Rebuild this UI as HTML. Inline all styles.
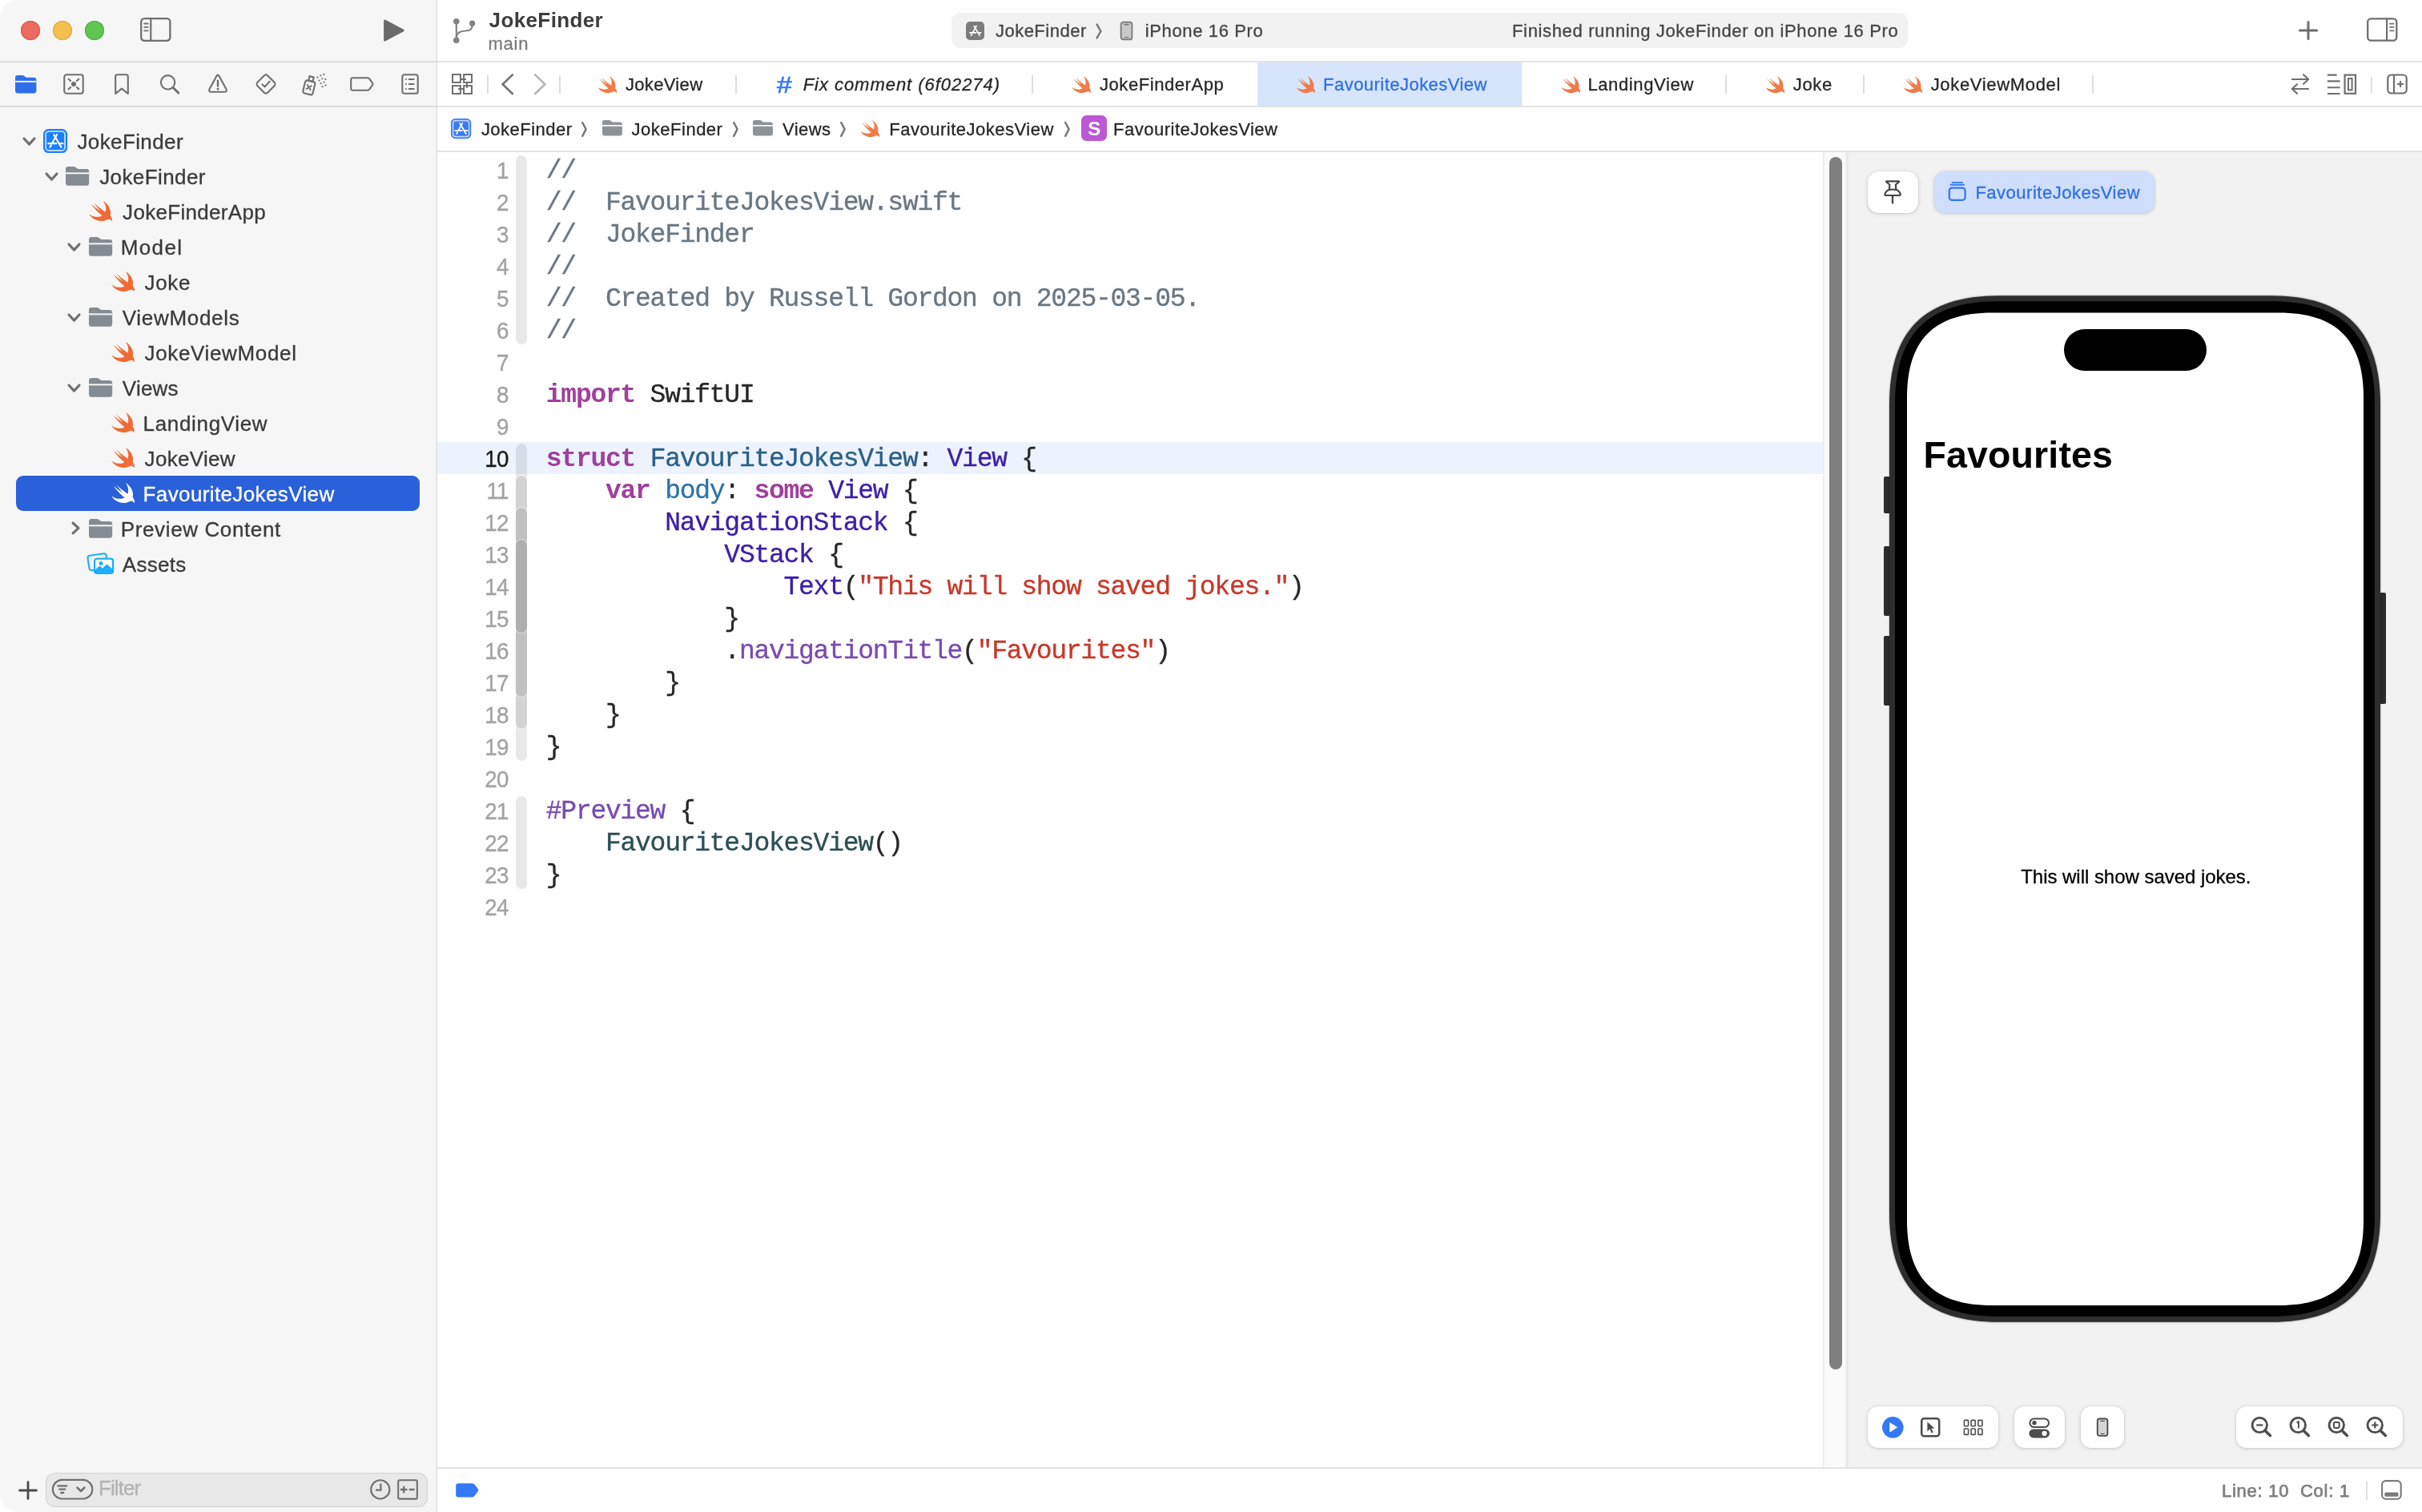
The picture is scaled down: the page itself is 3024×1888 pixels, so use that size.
<!DOCTYPE html>
<html lang="en"><head><meta charset="utf-8"><title>JokeFinder — FavouriteJokesView.swift</title><style>
html,body{margin:0;padding:0}
@media (max-width:1600px){html{zoom:.5}}
body{width:3024px;height:1888px;position:relative;overflow:hidden;background:#fff;font-family:"Liberation Sans",sans-serif}
#r{position:absolute;left:0;top:0;width:3024px;height:1888px;will-change:transform}
#r>div,#r>svg,#r>span{position:absolute;display:block}
.t{white-space:pre;line-height:1;-webkit-text-stroke:0.3px}
.t.b{-webkit-text-stroke:0}
svg{overflow:visible}
.cl{left:681.8px;height:40px;line-height:40px;white-space:pre;font-family:"Liberation Mono",monospace;font-size:33px;letter-spacing:-1.258px;color:#262626;-webkit-text-stroke:0.35px}
.cl .k{font-weight:700;-webkit-text-stroke:0}
#r>.ln{left:540px;width:94.6px;height:40px;line-height:40px;text-align:right;font-size:29.2px;letter-spacing:-0.85px;color:#a3a3a3;transform:scaleX(.95);transform-origin:100% 50%;-webkit-text-stroke:0.35px}
#r>.ln.cur{color:#1a1a1a}
</style></head>
<body>
<div id="r">
<div style="left:0px;top:0px;width:545px;height:1888px;background:#f6f6f6;border-radius:22px 0 0 22px;"></div>
<div style="left:544px;top:0px;width:1px;height:1888px;background:#eeeeee;"></div>
<div style="left:545px;top:0px;width:1px;height:1888px;background:#dddddd;"></div>
<div style="left:0px;top:76px;width:545px;height:2px;background:#dddddd;"></div>
<div style="left:546px;top:76px;width:2478px;height:2px;background:#e3e3e3;"></div>
<div style="left:0px;top:132px;width:545px;height:2px;background:#dddddd;"></div>
<div style="left:546px;top:132px;width:2478px;height:2px;background:#e3e3e3;"></div>
<div style="left:546px;top:188px;width:2478px;height:2px;background:#e3e3e3;"></div>
<div style="left:26px;top:26px;width:24px;height:24px;background:#ec6a5e;border-radius:12px;box-shadow:inset 0 0 0 1px #d4544a;"></div>
<div style="left:66px;top:26px;width:24px;height:24px;background:#f4bf4f;border-radius:12px;box-shadow:inset 0 0 0 1px #dba73d;"></div>
<div style="left:106px;top:26px;width:24px;height:24px;background:#61c554;border-radius:12px;box-shadow:inset 0 0 0 1px #50a943;"></div>
<svg style="left:174px;top:21px;" width="41" height="32" viewBox="0 0 41 32"><rect x="2.2" y="2.1" width="36.2" height="27.7" rx="4.2" fill="none" stroke="#6f6f6f" stroke-width="2.3"/><path d="M14.3 2.2 V29.8" stroke="#6f6f6f" stroke-width="2.2"/><path d="M6.2 8.5 h4.6 M6.2 12.9 h4.6 M6.2 17.3 h4.6" stroke="#6f6f6f" stroke-width="1.8" stroke-linecap="round"/></svg>
<svg style="left:478px;top:23px;" width="30" height="30" viewBox="0 0 30 30"><path d="M2.6 3 L25.2 15 L2.6 27 Z" fill="#6a6a6a" stroke="#6a6a6a" stroke-width="3" stroke-linejoin="round"/></svg>
<svg style="left:564px;top:21px;" width="32" height="35" viewBox="0 0 32 35"><g fill="none" stroke="#828282" stroke-width="2.2"><path d="M5.8 6 V29"/><path d="M25.6 8.2 V10.6 C25.6 16.4 22 17.1 17.4 17.5 C11.4 18 6.6 19 6 25"/></g><circle cx="5.8" cy="5.8" r="3.8" fill="#828282"/><circle cx="25.6" cy="8.2" r="3.6" fill="#828282"/><circle cx="5.8" cy="29.2" r="3.8" fill="#828282"/></svg>
<span class="t b" style='left:610.60px;top:12.00px;font-size:26px;color:#3d3d3d;letter-spacing:0.378px;font-weight:700;'>JokeFinder</span>
<span class="t" style='left:609.60px;top:43.50px;font-size:22px;color:#7b7b7b;letter-spacing:0.700px;'>main</span>
<div style="left:1188px;top:16px;width:1194px;height:44px;background:#f2f2f2;border-radius:11px;"></div>
<svg style="left:1206px;top:27px" width="23" height="23"><rect width="23" height="23" rx="5.06" fill="#7b7b7b"/><g stroke="#fff" stroke-width="1.61" stroke-linecap="round" fill="none"><path d="M13.03 5.37 L8.82 13.03"/><path d="M7.51 15.56 L6.44 17.33"/><path d="M10.12 5.52 L17.17 17.33"/><path d="M4.83 13.88 L12.57 13.88"/><path d="M15.79 13.88 L18.63 13.88"/></g></svg>
<span class="t" style='left:1242.90px;top:27.80px;font-size:22px;color:#444;letter-spacing:0.500px;'>JokeFinder</span>
<span class="t" style='left:1429.80px;top:27.80px;font-size:22px;color:#444;letter-spacing:0.625px;'>iPhone 16 Pro</span>
<span class="t" style='left:1888.00px;top:27.80px;font-size:22px;color:#444;letter-spacing:0.651px;'>Finished running JokeFinder on iPhone 16 Pro</span>
<svg style="left:1367px;top:29px;" width="10" height="20" viewBox="0 0 10 20"><path d="M2.6 1.6 L7.4 10 L2.6 18.4" fill="none" stroke="#777" stroke-width="2.5" stroke-linecap="round" stroke-linejoin="round"/></svg>
<svg style="left:1398px;top:26px;" width="17" height="25" viewBox="0 0 17 25"><rect x="1.6" y="1.6" width="13.8" height="21.8" rx="3" fill="#c9c9c9" stroke="#777" stroke-width="1.8"/><path d="M6 4.6 h5" stroke="#777" stroke-width="1.6" stroke-linecap="round"/><path d="M5.5 20.6 h6" stroke="#777" stroke-width="1.2"/></svg>
<svg style="left:2869px;top:25px;" width="26" height="26" viewBox="0 0 26 26"><path d="M13 2.4 V23.6 M2.4 13 H23.6" stroke="#6f6f6f" stroke-width="3" stroke-linecap="round"/></svg>
<svg style="left:2954px;top:21px;" width="41" height="32" viewBox="0 0 41 32"><rect x="2.2" y="2.3" width="36.1" height="27.4" rx="4.2" fill="none" stroke="#6f6f6f" stroke-width="2.3"/><path d="M26.1 2.4 V29.6" stroke="#6f6f6f" stroke-width="2.2"/><path d="M30 8.6 h4.6 M30 12.9 h4.6 M30 17.3 h4.6" stroke="#6f6f6f" stroke-width="1.8" stroke-linecap="round"/></svg>
<svg style="left:18.8px;top:93.8px" width="26.4" height="22.4"><path d="M0 3.02 Q0 0 2.91 0 L8.65 0 Q10.47 0 11.65 1.13 L12.74 2.17 Q13.47 2.84 14.75 2.84 L23.30 2.84 Q26.4 2.84 26.4 6.05 L26.4 19.00 Q26.4 22.4 23.12 22.4 L3.28 22.4 Q0 22.4 0 19.00 Z" fill="#2f6fea"/><rect x="0" y="6.90" width="26.4" height="1.89" fill="#f6f6f6"/></svg>
<svg style="left:78px;top:90.8px;" width="28" height="28" viewBox="0 0 28 28"><rect x="2.3" y="2.3" width="23.4" height="23.4" rx="2.8" fill="none" stroke="#6f6f6f" stroke-width="2.1" stroke-linecap="round" stroke-linejoin="round"/><circle cx="14" cy="14" r="3" fill="#6f6f6f"/><path d="M7.7 7.7 L10.1 10.1 M20.3 7.7 L17.9 10.1 M7.7 20.3 L10.1 17.9 M20.3 20.3 L17.9 17.9" fill="none" stroke="#6f6f6f" stroke-width="2.1" stroke-linecap="round" stroke-linejoin="round" stroke-width="2"/></svg>
<svg style="left:142px;top:91px;" width="20" height="28" viewBox="0 0 20 28"><path d="M2.2 4.6 Q2.2 2.2 4.6 2.2 L15.4 2.2 Q17.8 2.2 17.8 4.6 L17.8 26 L10 19.6 L2.2 26 Z" fill="none" stroke="#6f6f6f" stroke-width="2.1" stroke-linecap="round" stroke-linejoin="round"/></svg>
<svg style="left:198px;top:91px;" width="28" height="28" viewBox="0 0 28 28"><circle cx="11.6" cy="11.8" r="8.7" fill="none" stroke="#6f6f6f" stroke-width="2.1" stroke-linecap="round" stroke-linejoin="round"/><path d="M18 18.2 L24.8 25" fill="none" stroke="#6f6f6f" stroke-width="3" stroke-linecap="round"/></svg>
<svg style="left:259px;top:91px;" width="26" height="26" viewBox="0 0 26 26"><path d="M13 2.6 Q13.9 2.6 14.5 3.7 L23.6 20.6 Q24.6 23.6 22 23.7 L4 23.7 Q1.4 23.6 2.4 20.6 L11.5 3.7 Q12.1 2.6 13 2.6 Z" fill="none" stroke="#6f6f6f" stroke-width="2.1" stroke-linecap="round" stroke-linejoin="round"/><path d="M13 9.6 V16.4" fill="none" stroke="#6f6f6f" stroke-width="2.4" stroke-linecap="round"/><circle cx="13" cy="20" r="1.5" fill="#6f6f6f"/></svg>
<svg style="left:318px;top:91px;" width="28" height="28" viewBox="0 0 28 28"><path d="M14 2.2 Q15 2.2 16 3.2 L24.8 12 Q26.2 14 24.8 16 L16 24.8 Q14 26.2 12 24.8 L3.2 16 Q1.8 14 3.2 12 L12 3.2 Q13 2.2 14 2.2 Z" fill="none" stroke="#6f6f6f" stroke-width="2.1" stroke-linecap="round" stroke-linejoin="round"/><path d="M9.6 14.4 L12.8 17.4 L18.6 10.8" fill="none" stroke="#6f6f6f" stroke-width="2.1" stroke-linecap="round" stroke-linejoin="round"/></svg>
<svg style="left:376px;top:90px;" width="33" height="30" viewBox="0 0 33 30"><g transform="rotate(14 10 19)"><rect x="3.6" y="11.2" width="12.6" height="16.4" rx="2.6" fill="none" stroke="#6f6f6f" stroke-width="2.1" stroke-linecap="round" stroke-linejoin="round"/><rect x="7.2" y="5.4" width="5.4" height="5.6" fill="none" stroke="#6f6f6f" stroke-width="2.1" stroke-linecap="round" stroke-linejoin="round"/><path d="M7.2 16.6 L12.4 21.8 M12.4 16.6 L7.2 21.8" fill="none" stroke="#6f6f6f" stroke-width="1.9" stroke-linecap="round"/></g><g fill="#6f6f6f"><rect x="19.5" y="5.6" width="1.9" height="1.9"/><rect x="23.4" y="3.4" width="1.9" height="1.9"/><rect x="27.4" y="1.8" width="1.9" height="1.9"/><rect x="21.6" y="9.6" width="1.9" height="1.9"/><rect x="25.4" y="7.4" width="1.9" height="1.9"/><rect x="29.4" y="8" width="1.9" height="1.9"/><rect x="23.6" y="13.2" width="1.9" height="1.9"/><rect x="27.6" y="11.6" width="1.9" height="1.9"/><rect x="25.6" y="17.2" width="1.9" height="1.9"/><rect x="29.6" y="15.6" width="1.9" height="1.9"/></g></svg>
<svg style="left:436px;top:95px;" width="32" height="20" viewBox="0 0 32 20"><path d="M4.4 2.3 L22.8 2.3 Q24.6 2.3 25.6 3.8 L29.2 9 Q29.8 10 29.2 11 L25.6 16.2 Q24.6 17.7 22.8 17.7 L4.4 17.7 Q2.2 17.7 2.2 15.4 L2.2 4.6 Q2.2 2.3 4.4 2.3 Z" fill="none" stroke="#6f6f6f" stroke-width="2.1" stroke-linecap="round" stroke-linejoin="round"/></svg>
<svg style="left:500px;top:91px;" width="24" height="28" viewBox="0 0 24 28"><rect x="2.3" y="2.2" width="19.4" height="23.6" rx="2.6" fill="none" stroke="#6f6f6f" stroke-width="2.1" stroke-linecap="round" stroke-linejoin="round"/><path d="M10 8 H17.4 M10 14 H17.4 M10 20 H17.4" fill="none" stroke="#6f6f6f" stroke-width="2.2"/><path d="M6.2 8 H7.8 M6.2 14 H7.8 M6.2 20 H7.8" fill="none" stroke="#6f6f6f" stroke-width="2.2"/></svg>
<div style="left:20px;top:594px;width:504px;height:44px;background:#2a60da;border-radius:9px;"></div>
<span class="t" style='left:96.40px;top:164.00px;font-size:26px;color:#3a3a3a;letter-spacing:0.400px;'>JokeFinder</span>
<svg style="left:27.700000000000003px;top:171.25px" width="17.0" height="11.1"><path d="M2 2 L8.5 9.1 L15.0 2" fill="none" stroke="#6f6f6f" stroke-width="3.1" stroke-linecap="round" stroke-linejoin="round"/></svg>
<svg style="left:54px;top:160.9px" width="30.1" height="30.1"><rect width="30.1" height="30.1" rx="6.62" fill="#1a80fb"/><rect x="3.11" y="3.11" width="23.88" height="23.88" rx="3.81" fill="none" stroke="#fff" stroke-opacity=".7" stroke-width="1.91"/><g stroke="#fff" stroke-width="2.11" stroke-linecap="round" fill="none"><path d="M17.06 7.02 L11.54 17.06"/><path d="M9.83 20.37 L8.43 22.68"/><path d="M13.24 7.22 L22.47 22.68"/><path d="M6.32 18.16 L16.45 18.16"/><path d="M20.67 18.16 L24.38 18.16"/></g></svg>
<span class="t" style='left:124.20px;top:208.00px;font-size:26px;color:#3a3a3a;letter-spacing:0.400px;'>JokeFinder</span>
<svg style="left:55.7px;top:215.25px" width="17.0" height="11.1"><path d="M2 2 L8.5 9.1 L15.0 2" fill="none" stroke="#6f6f6f" stroke-width="3.1" stroke-linecap="round" stroke-linejoin="round"/></svg>
<svg style="left:82.4px;top:208px" width="29.2" height="23.8"><path d="M0 3.21 Q0 0 3.22 0 L9.57 0 Q11.58 0 12.89 1.21 L14.10 2.31 Q14.90 3.01 16.31 3.01 L25.78 3.01 Q29.2 3.01 29.2 6.43 L29.2 20.18 Q29.2 23.8 25.58 23.8 L3.62 23.8 Q0 23.8 0 20.18 Z" fill="#858b92"/><rect x="0" y="7.33" width="29.2" height="2.01" fill="#f6f6f6"/></svg>
<span class="t" style='left:153.10px;top:252.00px;font-size:26px;color:#3a3a3a;letter-spacing:0.308px;'>JokeFinderApp</span>
<svg style="left:111.3px;top:250.8px" width="29" height="25.2"><path transform="scale(1.6007,1.5543) translate(-2.411,-3.409)" d="M13.543 3.41c4.114 2.47 6.545 7.162 5.549 11.131-.024.093-.05.181-.076.272l.002.001c2.062 2.538 1.5 5.258 1.236 4.745-1.072-2.086-3.066-1.568-4.088-1.043a6.803 6.803 0 0 1-.281.158l-.02.012-.002.002c-2.115 1.123-4.957 1.205-7.812-.022a12.568 12.568 0 0 1-5.64-4.838c.649.48 1.35.902 2.097 1.252 3.019 1.414 6.051 1.311 8.197-.002C9.651 12.73 7.101 9.67 5.146 7.191a10.628 10.628 0 0 1-1.005-1.384c2.34 2.142 6.038 4.83 7.365 5.576C8.69 8.408 6.208 4.743 6.324 4.86c4.436 4.47 8.528 6.996 8.528 6.996.154.085.27.154.36.213.085-.215.16-.437.224-.668.708-2.588-.09-5.548-1.893-7.992z" fill="#f06a35"/></svg>
<span class="t" style='left:150.80px;top:296.00px;font-size:26px;color:#3a3a3a;letter-spacing:1.350px;'>Model</span>
<svg style="left:83.7px;top:303.25px" width="17.0" height="11.1"><path d="M2 2 L8.5 9.1 L15.0 2" fill="none" stroke="#6f6f6f" stroke-width="3.1" stroke-linecap="round" stroke-linejoin="round"/></svg>
<svg style="left:111.00000000000001px;top:296px" width="29.2" height="23.8"><path d="M0 3.21 Q0 0 3.22 0 L9.57 0 Q11.58 0 12.89 1.21 L14.10 2.31 Q14.90 3.01 16.31 3.01 L25.78 3.01 Q29.2 3.01 29.2 6.43 L29.2 20.18 Q29.2 23.8 25.58 23.8 L3.62 23.8 Q0 23.8 0 20.18 Z" fill="#858b92"/><rect x="0" y="7.33" width="29.2" height="2.01" fill="#f6f6f6"/></svg>
<span class="t" style='left:180.60px;top:340.00px;font-size:26px;color:#3a3a3a;letter-spacing:0.633px;'>Joke</span>
<svg style="left:138.79999999999998px;top:338.8px" width="29" height="25.2"><path transform="scale(1.6007,1.5543) translate(-2.411,-3.409)" d="M13.543 3.41c4.114 2.47 6.545 7.162 5.549 11.131-.024.093-.05.181-.076.272l.002.001c2.062 2.538 1.5 5.258 1.236 4.745-1.072-2.086-3.066-1.568-4.088-1.043a6.803 6.803 0 0 1-.281.158l-.02.012-.002.002c-2.115 1.123-4.957 1.205-7.812-.022a12.568 12.568 0 0 1-5.64-4.838c.649.48 1.35.902 2.097 1.252 3.019 1.414 6.051 1.311 8.197-.002C9.651 12.73 7.101 9.67 5.146 7.191a10.628 10.628 0 0 1-1.005-1.384c2.34 2.142 6.038 4.83 7.365 5.576C8.69 8.408 6.208 4.743 6.324 4.86c4.436 4.47 8.528 6.996 8.528 6.996.154.085.27.154.36.213.085-.215.16-.437.224-.668.708-2.588-.09-5.548-1.893-7.992z" fill="#f06a35"/></svg>
<span class="t" style='left:152.80px;top:384.00px;font-size:26px;color:#3a3a3a;letter-spacing:0.689px;'>ViewModels</span>
<svg style="left:83.7px;top:391.25px" width="17.0" height="11.1"><path d="M2 2 L8.5 9.1 L15.0 2" fill="none" stroke="#6f6f6f" stroke-width="3.1" stroke-linecap="round" stroke-linejoin="round"/></svg>
<svg style="left:111.00000000000001px;top:384px" width="29.2" height="23.8"><path d="M0 3.21 Q0 0 3.22 0 L9.57 0 Q11.58 0 12.89 1.21 L14.10 2.31 Q14.90 3.01 16.31 3.01 L25.78 3.01 Q29.2 3.01 29.2 6.43 L29.2 20.18 Q29.2 23.8 25.58 23.8 L3.62 23.8 Q0 23.8 0 20.18 Z" fill="#858b92"/><rect x="0" y="7.33" width="29.2" height="2.01" fill="#f6f6f6"/></svg>
<span class="t" style='left:180.60px;top:428.00px;font-size:26px;color:#3a3a3a;letter-spacing:0.642px;'>JokeViewModel</span>
<svg style="left:138.79999999999998px;top:426.8px" width="29" height="25.2"><path transform="scale(1.6007,1.5543) translate(-2.411,-3.409)" d="M13.543 3.41c4.114 2.47 6.545 7.162 5.549 11.131-.024.093-.05.181-.076.272l.002.001c2.062 2.538 1.5 5.258 1.236 4.745-1.072-2.086-3.066-1.568-4.088-1.043a6.803 6.803 0 0 1-.281.158l-.02.012-.002.002c-2.115 1.123-4.957 1.205-7.812-.022a12.568 12.568 0 0 1-5.64-4.838c.649.48 1.35.902 2.097 1.252 3.019 1.414 6.051 1.311 8.197-.002C9.651 12.73 7.101 9.67 5.146 7.191a10.628 10.628 0 0 1-1.005-1.384c2.34 2.142 6.038 4.83 7.365 5.576C8.69 8.408 6.208 4.743 6.324 4.86c4.436 4.47 8.528 6.996 8.528 6.996.154.085.27.154.36.213.085-.215.16-.437.224-.668.708-2.588-.09-5.548-1.893-7.992z" fill="#f06a35"/></svg>
<span class="t" style='left:152.80px;top:472.00px;font-size:26px;color:#3a3a3a;letter-spacing:0.225px;'>Views</span>
<svg style="left:83.7px;top:479.25px" width="17.0" height="11.1"><path d="M2 2 L8.5 9.1 L15.0 2" fill="none" stroke="#6f6f6f" stroke-width="3.1" stroke-linecap="round" stroke-linejoin="round"/></svg>
<svg style="left:111.00000000000001px;top:472px" width="29.2" height="23.8"><path d="M0 3.21 Q0 0 3.22 0 L9.57 0 Q11.58 0 12.89 1.21 L14.10 2.31 Q14.90 3.01 16.31 3.01 L25.78 3.01 Q29.2 3.01 29.2 6.43 L29.2 20.18 Q29.2 23.8 25.58 23.8 L3.62 23.8 Q0 23.8 0 20.18 Z" fill="#858b92"/><rect x="0" y="7.33" width="29.2" height="2.01" fill="#f6f6f6"/></svg>
<span class="t" style='left:178.60px;top:516.00px;font-size:26px;color:#3a3a3a;letter-spacing:0.660px;'>LandingView</span>
<svg style="left:138.79999999999998px;top:514.8px" width="29" height="25.2"><path transform="scale(1.6007,1.5543) translate(-2.411,-3.409)" d="M13.543 3.41c4.114 2.47 6.545 7.162 5.549 11.131-.024.093-.05.181-.076.272l.002.001c2.062 2.538 1.5 5.258 1.236 4.745-1.072-2.086-3.066-1.568-4.088-1.043a6.803 6.803 0 0 1-.281.158l-.02.012-.002.002c-2.115 1.123-4.957 1.205-7.812-.022a12.568 12.568 0 0 1-5.64-4.838c.649.48 1.35.902 2.097 1.252 3.019 1.414 6.051 1.311 8.197-.002C9.651 12.73 7.101 9.67 5.146 7.191a10.628 10.628 0 0 1-1.005-1.384c2.34 2.142 6.038 4.83 7.365 5.576C8.69 8.408 6.208 4.743 6.324 4.86c4.436 4.47 8.528 6.996 8.528 6.996.154.085.27.154.36.213.085-.215.16-.437.224-.668.708-2.588-.09-5.548-1.893-7.992z" fill="#f06a35"/></svg>
<span class="t" style='left:180.60px;top:560.00px;font-size:26px;color:#3a3a3a;letter-spacing:0.300px;'>JokeView</span>
<svg style="left:138.79999999999998px;top:558.8px" width="29" height="25.2"><path transform="scale(1.6007,1.5543) translate(-2.411,-3.409)" d="M13.543 3.41c4.114 2.47 6.545 7.162 5.549 11.131-.024.093-.05.181-.076.272l.002.001c2.062 2.538 1.5 5.258 1.236 4.745-1.072-2.086-3.066-1.568-4.088-1.043a6.803 6.803 0 0 1-.281.158l-.02.012-.002.002c-2.115 1.123-4.957 1.205-7.812-.022a12.568 12.568 0 0 1-5.64-4.838c.649.48 1.35.902 2.097 1.252 3.019 1.414 6.051 1.311 8.197-.002C9.651 12.73 7.101 9.67 5.146 7.191a10.628 10.628 0 0 1-1.005-1.384c2.34 2.142 6.038 4.83 7.365 5.576C8.69 8.408 6.208 4.743 6.324 4.86c4.436 4.47 8.528 6.996 8.528 6.996.154.085.27.154.36.213.085-.215.16-.437.224-.668.708-2.588-.09-5.548-1.893-7.992z" fill="#f06a35"/></svg>
<span class="t" style='left:178.60px;top:604.00px;font-size:26px;color:#ffffff;letter-spacing:0.376px;'>FavouriteJokesView</span>
<svg style="left:138.79999999999998px;top:602.8px" width="29" height="25.2"><path transform="scale(1.6007,1.5543) translate(-2.411,-3.409)" d="M13.543 3.41c4.114 2.47 6.545 7.162 5.549 11.131-.024.093-.05.181-.076.272l.002.001c2.062 2.538 1.5 5.258 1.236 4.745-1.072-2.086-3.066-1.568-4.088-1.043a6.803 6.803 0 0 1-.281.158l-.02.012-.002.002c-2.115 1.123-4.957 1.205-7.812-.022a12.568 12.568 0 0 1-5.64-4.838c.649.48 1.35.902 2.097 1.252 3.019 1.414 6.051 1.311 8.197-.002C9.651 12.73 7.101 9.67 5.146 7.191a10.628 10.628 0 0 1-1.005-1.384c2.34 2.142 6.038 4.83 7.365 5.576C8.69 8.408 6.208 4.743 6.324 4.86c4.436 4.47 8.528 6.996 8.528 6.996.154.085.27.154.36.213.085-.215.16-.437.224-.668.708-2.588-.09-5.548-1.893-7.992z" fill="#ffffff"/></svg>
<span class="t" style='left:150.80px;top:648.00px;font-size:26px;color:#3a3a3a;letter-spacing:0.621px;'>Preview Content</span>
<svg style="left:88.6px;top:651.1px" width="11.0" height="16.8"><path d="M2 2 L9.0 8.4 L2 14.8" fill="none" stroke="#6f6f6f" stroke-width="3.1" stroke-linecap="round" stroke-linejoin="round"/></svg>
<svg style="left:111.00000000000001px;top:648px" width="29.2" height="23.8"><path d="M0 3.21 Q0 0 3.22 0 L9.57 0 Q11.58 0 12.89 1.21 L14.10 2.31 Q14.90 3.01 16.31 3.01 L25.78 3.01 Q29.2 3.01 29.2 6.43 L29.2 20.18 Q29.2 23.8 25.58 23.8 L3.62 23.8 Q0 23.8 0 20.18 Z" fill="#858b92"/><rect x="0" y="7.33" width="29.2" height="2.01" fill="#f6f6f6"/></svg>
<span class="t" style='left:152.80px;top:692.00px;font-size:26px;color:#3a3a3a;letter-spacing:0.280px;'>Assets</span>
<svg style="left:108px;top:688px;" width="36" height="31" viewBox="0 0 36 31"><g transform="rotate(-8.5 13 14)"><rect x="2.4" y="4.6" width="23.4" height="18.6" rx="3" fill="#f6f6f6" stroke="#1eaef6" stroke-width="2.1"/></g><rect x="10.1" y="9.7" width="23" height="18.2" rx="3" fill="#fff" stroke="#1eaef6" stroke-width="2.2"/><path d="M10.6 23.4 L16.4 18.6 L20 21.4 L25.4 16.6 L32.6 22.6 L32.6 25.6 Q32.6 27.6 30.6 27.6 L12.6 27.6 Q10.6 27.6 10.6 25.6 Z" fill="#1eaef6"/><circle cx="18.1" cy="15.6" r="2.5" fill="#1eaef6"/></svg>
<svg style="left:22px;top:1848px;" width="26" height="26" viewBox="0 0 26 26"><path d="M13 2.6 V23.4 M2.6 13 H23.4" stroke="#4a4a4a" stroke-width="2.8" stroke-linecap="round"/></svg>
<div style="left:56.5px;top:1838.5px;width:477px;height:43.5px;background:#e8e8e8;border-radius:12px;box-shadow:inset 0 0 0 1px #d2d2d2;"></div>
<svg style="left:64px;top:1846px;" width="54" height="28" viewBox="0 0 54 28"><rect x="1.9" y="1.9" width="49.4" height="23.6" rx="11.8" fill="none" stroke="#6f6f6f" stroke-width="2.2"/><path d="M8.2 9.4 H19.2 M10.2 13.7 H17.2 M12.2 18 H15.2" stroke="#6f6f6f" stroke-width="2.3" fill="none" stroke-linecap="round"/><path d="M32.6 11.6 L37 16 L41.4 11.6" fill="none" stroke="#6f6f6f" stroke-width="2.6" stroke-linecap="round" stroke-linejoin="round"/></svg>
<span class="t" style='left:123.10px;top:1845.00px;font-size:26px;color:#b3b3b3;letter-spacing:-0.940px;'>Filter</span>
<svg style="left:461px;top:1846px;" width="28" height="28" viewBox="0 0 28 28"><circle cx="13.8" cy="13.9" r="11.6" fill="none" stroke="#6f6f6f" stroke-width="2.1"/><path d="M14.4 6.6 V14.6 H8" fill="none" stroke="#6f6f6f" stroke-width="2.2"/></svg>
<svg style="left:495px;top:1846px;" width="28" height="28" viewBox="0 0 28 28"><rect x="2.2" y="2.2" width="23.6" height="23.4" rx="1.6" fill="none" stroke="#6f6f6f" stroke-width="2.1"/><path d="M5 14 H13.4 M9.2 9.8 V18.2 M15.8 14 H22.6" fill="none" stroke="#6f6f6f" stroke-width="2.3"/></svg>
<div style="left:1570px;top:78px;width:330px;height:54px;background:#d6e5fc;"></div>
<svg style="left:563px;top:91px;" width="28" height="28" viewBox="0 0 28 28"><rect x="2" y="2" width="9.9" height="9.9" fill="none" stroke="#6f6f6f" stroke-width="2"/><rect x="16.1" y="2" width="9.9" height="9.9" fill="none" stroke="#6f6f6f" stroke-width="2"/><rect x="2" y="16.1" width="9.9" height="9.9" fill="none" stroke="#6f6f6f" stroke-width="2"/><rect x="16.1" y="16.1" width="9.9" height="9.9" fill="none" stroke="#6f6f6f" stroke-width="2"/><path d="M11.9 7.9 H18.9 M20 11.9 V18.7 M9.1 20 H16.1" fill="none" stroke="#6f6f6f" stroke-width="2"/></svg>
<div style="left:608px;top:94px;width:2px;height:23px;background:#dedede;"></div>
<div style="left:698px;top:94px;width:2px;height:23px;background:#dedede;"></div>
<div style="left:918px;top:94px;width:2px;height:23px;background:#dedede;"></div>
<div style="left:1288.3px;top:94px;width:2px;height:23px;background:#dedede;"></div>
<div style="left:2153.7px;top:94px;width:2px;height:23px;background:#dedede;"></div>
<div style="left:2326px;top:94px;width:2px;height:23px;background:#dedede;"></div>
<div style="left:2612px;top:94px;width:2px;height:23px;background:#dedede;"></div>
<svg style="left:624px;top:90px;" width="20" height="31" viewBox="0 0 20 31"><path d="M16.6 2.6 L3.6 15.2 L16.6 27.8" fill="none" stroke="#737373" stroke-width="2.7" stroke-linejoin="miter"/></svg>
<svg style="left:664px;top:90px;" width="20" height="31" viewBox="0 0 20 31"><path d="M3.4 2.6 L16.4 15.2 L3.4 27.8" fill="none" stroke="#b8b8b8" stroke-width="2.7" stroke-linejoin="miter"/></svg>
<svg style="left:746.2px;top:94.8px" width="24.1" height="21.3"><path transform="scale(1.3302,1.3138) translate(-2.411,-3.409)" d="M13.543 3.41c4.114 2.47 6.545 7.162 5.549 11.131-.024.093-.05.181-.076.272l.002.001c2.062 2.538 1.5 5.258 1.236 4.745-1.072-2.086-3.066-1.568-4.088-1.043a6.803 6.803 0 0 1-.281.158l-.02.012-.002.002c-2.115 1.123-4.957 1.205-7.812-.022a12.568 12.568 0 0 1-5.64-4.838c.649.48 1.35.902 2.097 1.252 3.019 1.414 6.051 1.311 8.197-.002C9.651 12.73 7.101 9.67 5.146 7.191a10.628 10.628 0 0 1-1.005-1.384c2.34 2.142 6.038 4.83 7.365 5.576C8.69 8.408 6.208 4.743 6.324 4.86c4.436 4.47 8.528 6.996 8.528 6.996.154.085.27.154.36.213.085-.215.16-.437.224-.668.708-2.588-.09-5.548-1.893-7.992z" fill="#ef7b4b"/></svg>
<span class="t" style='left:780.90px;top:94.70px;font-size:22px;color:#262626;letter-spacing:0.343px;'>JokeView</span>
<span class="t" style='left:970.40px;top:91.20px;font-size:30px;color:#3478f6;transform:scaleX(1.12);transform-origin:0 0;-webkit-text-stroke:0.7px;'>#</span>
<span class="t" style='left:1002.70px;top:95.00px;font-size:22px;color:#262626;letter-spacing:0.960px;font-style:italic;'>Fix comment (6f02274)</span>
<svg style="left:1338.3px;top:94.8px" width="24.1" height="21.3"><path transform="scale(1.3302,1.3138) translate(-2.411,-3.409)" d="M13.543 3.41c4.114 2.47 6.545 7.162 5.549 11.131-.024.093-.05.181-.076.272l.002.001c2.062 2.538 1.5 5.258 1.236 4.745-1.072-2.086-3.066-1.568-4.088-1.043a6.803 6.803 0 0 1-.281.158l-.02.012-.002.002c-2.115 1.123-4.957 1.205-7.812-.022a12.568 12.568 0 0 1-5.64-4.838c.649.48 1.35.902 2.097 1.252 3.019 1.414 6.051 1.311 8.197-.002C9.651 12.73 7.101 9.67 5.146 7.191a10.628 10.628 0 0 1-1.005-1.384c2.34 2.142 6.038 4.83 7.365 5.576C8.69 8.408 6.208 4.743 6.324 4.86c4.436 4.47 8.528 6.996 8.528 6.996.154.085.27.154.36.213.085-.215.16-.437.224-.668.708-2.588-.09-5.548-1.893-7.992z" fill="#ef7b4b"/></svg>
<span class="t" style='left:1373.00px;top:94.70px;font-size:22px;color:#262626;letter-spacing:0.567px;'>JokeFinderApp</span>
<svg style="left:1618.2px;top:94.8px" width="24.1" height="21.3"><path transform="scale(1.3302,1.3138) translate(-2.411,-3.409)" d="M13.543 3.41c4.114 2.47 6.545 7.162 5.549 11.131-.024.093-.05.181-.076.272l.002.001c2.062 2.538 1.5 5.258 1.236 4.745-1.072-2.086-3.066-1.568-4.088-1.043a6.803 6.803 0 0 1-.281.158l-.02.012-.002.002c-2.115 1.123-4.957 1.205-7.812-.022a12.568 12.568 0 0 1-5.64-4.838c.649.48 1.35.902 2.097 1.252 3.019 1.414 6.051 1.311 8.197-.002C9.651 12.73 7.101 9.67 5.146 7.191a10.628 10.628 0 0 1-1.005-1.384c2.34 2.142 6.038 4.83 7.365 5.576C8.69 8.408 6.208 4.743 6.324 4.86c4.436 4.47 8.528 6.996 8.528 6.996.154.085.27.154.36.213.085-.215.16-.437.224-.668.708-2.588-.09-5.548-1.893-7.992z" fill="#ef7b4b"/></svg>
<span class="t" style='left:1652.10px;top:94.70px;font-size:22px;color:#2f6fe6;letter-spacing:0.465px;'>FavouriteJokesView</span>
<svg style="left:1949px;top:94.8px" width="24.1" height="21.3"><path transform="scale(1.3302,1.3138) translate(-2.411,-3.409)" d="M13.543 3.41c4.114 2.47 6.545 7.162 5.549 11.131-.024.093-.05.181-.076.272l.002.001c2.062 2.538 1.5 5.258 1.236 4.745-1.072-2.086-3.066-1.568-4.088-1.043a6.803 6.803 0 0 1-.281.158l-.02.012-.002.002c-2.115 1.123-4.957 1.205-7.812-.022a12.568 12.568 0 0 1-5.64-4.838c.649.48 1.35.902 2.097 1.252 3.019 1.414 6.051 1.311 8.197-.002C9.651 12.73 7.101 9.67 5.146 7.191a10.628 10.628 0 0 1-1.005-1.384c2.34 2.142 6.038 4.83 7.365 5.576C8.69 8.408 6.208 4.743 6.324 4.86c4.436 4.47 8.528 6.996 8.528 6.996.154.085.27.154.36.213.085-.215.16-.437.224-.668.708-2.588-.09-5.548-1.893-7.992z" fill="#ef7b4b"/></svg>
<span class="t" style='left:1982.40px;top:94.70px;font-size:22px;color:#262626;letter-spacing:0.630px;'>LandingView</span>
<svg style="left:2204.3px;top:94.8px" width="24.1" height="21.3"><path transform="scale(1.3302,1.3138) translate(-2.411,-3.409)" d="M13.543 3.41c4.114 2.47 6.545 7.162 5.549 11.131-.024.093-.05.181-.076.272l.002.001c2.062 2.538 1.5 5.258 1.236 4.745-1.072-2.086-3.066-1.568-4.088-1.043a6.803 6.803 0 0 1-.281.158l-.02.012-.002.002c-2.115 1.123-4.957 1.205-7.812-.022a12.568 12.568 0 0 1-5.64-4.838c.649.48 1.35.902 2.097 1.252 3.019 1.414 6.051 1.311 8.197-.002C9.651 12.73 7.101 9.67 5.146 7.191a10.628 10.628 0 0 1-1.005-1.384c2.34 2.142 6.038 4.83 7.365 5.576C8.69 8.408 6.208 4.743 6.324 4.86c4.436 4.47 8.528 6.996 8.528 6.996.154.085.27.154.36.213.085-.215.16-.437.224-.668.708-2.588-.09-5.548-1.893-7.992z" fill="#ef7b4b"/></svg>
<span class="t" style='left:2238.70px;top:94.70px;font-size:22px;color:#262626;letter-spacing:0.700px;'>Joke</span>
<svg style="left:2376.2px;top:94.8px" width="24.1" height="21.3"><path transform="scale(1.3302,1.3138) translate(-2.411,-3.409)" d="M13.543 3.41c4.114 2.47 6.545 7.162 5.549 11.131-.024.093-.05.181-.076.272l.002.001c2.062 2.538 1.5 5.258 1.236 4.745-1.072-2.086-3.066-1.568-4.088-1.043a6.803 6.803 0 0 1-.281.158l-.02.012-.002.002c-2.115 1.123-4.957 1.205-7.812-.022a12.568 12.568 0 0 1-5.64-4.838c.649.48 1.35.902 2.097 1.252 3.019 1.414 6.051 1.311 8.197-.002C9.651 12.73 7.101 9.67 5.146 7.191a10.628 10.628 0 0 1-1.005-1.384c2.34 2.142 6.038 4.83 7.365 5.576C8.69 8.408 6.208 4.743 6.324 4.86c4.436 4.47 8.528 6.996 8.528 6.996.154.085.27.154.36.213.085-.215.16-.437.224-.668.708-2.588-.09-5.548-1.893-7.992z" fill="#ef7b4b"/></svg>
<span class="t" style='left:2410.70px;top:94.70px;font-size:22px;color:#262626;letter-spacing:0.667px;'>JokeViewModel</span>
<svg style="left:2858px;top:91px;" width="28" height="28" viewBox="0 0 28 28"><path d="M4 8 H24 M18 2.2 L24.2 8 L18 13.8" fill="none" stroke="#6f6f6f" stroke-width="2.2" stroke-linecap="round" stroke-linejoin="round"/><path d="M24 20 H4 M10 14.2 L3.8 20 L10 25.8" fill="none" stroke="#6f6f6f" stroke-width="2.2" stroke-linecap="round" stroke-linejoin="round"/></svg>
<svg style="left:2904px;top:91px;" width="40" height="28" viewBox="0 0 40 28"><path d="M2 2.6 H13.6 M2 10.4 H17.6 M2 18.2 H17.6 M2 26 H17.6" fill="none" stroke="#6f6f6f" stroke-width="2.1"/><rect x="23.6" y="2.6" width="13.4" height="23.2" fill="none" stroke="#6f6f6f" stroke-width="2.2"/><rect x="28" y="7" width="4.6" height="14.4" fill="none" stroke="#6f6f6f" stroke-width="2"/></svg>
<div style="left:2959.6px;top:96px;width:2px;height:20px;background:#e0e0e0;"></div>
<svg style="left:2979px;top:91px;" width="28" height="28" viewBox="0 0 28 28"><rect x="2.3" y="2.5" width="23.4" height="23" rx="4.4" fill="none" stroke="#6f6f6f" stroke-width="2.2"/><path d="M10 2.6 V25.4" fill="none" stroke="#6f6f6f" stroke-width="2.2"/><path d="M14 14 H22 M18 10 V18" fill="none" stroke="#6f6f6f" stroke-width="2.1"/></svg>
<svg style="left:563px;top:147.6px" width="25.2" height="25.2"><rect width="25.2" height="25.2" rx="5.54" fill="#3a7af2"/><rect x="2.60" y="2.60" width="19.99" height="19.99" rx="3.19" fill="none" stroke="#fff" stroke-opacity=".7" stroke-width="1.60"/><g stroke="#fff" stroke-width="1.76" stroke-linecap="round" fill="none"><path d="M14.28 5.88 L9.66 14.28"/><path d="M8.23 17.05 L7.06 18.98"/><path d="M11.09 6.05 L18.82 18.98"/><path d="M5.29 15.20 L13.78 15.20"/><path d="M17.30 15.20 L20.41 15.20"/></g></svg>
<span class="t" style='left:600.90px;top:151.00px;font-size:22px;color:#262626;letter-spacing:0.478px;'>JokeFinder</span>
<svg style="left:725.4px;top:150.6px;" width="9" height="21" viewBox="0 0 9 21"><path d="M2.2 2 L6.6 10.4 L2.2 18.8" fill="none" stroke="#787878" stroke-width="2.5" stroke-linecap="round" stroke-linejoin="round"/></svg>
<svg style="left:751.7px;top:150.2px" width="24.9" height="19.6"><path d="M0 2.65 Q0 0 2.75 0 L8.16 0 Q9.87 0 10.99 0.99 L12.02 1.90 Q12.71 2.48 13.91 2.48 L21.98 2.48 Q24.9 2.48 24.9 5.29 L24.9 16.62 Q24.9 19.6 21.81 19.6 L3.09 19.6 Q0 19.6 0 16.62 Z" fill="#8d9297"/><rect x="0" y="6.04" width="24.9" height="1.65" fill="#fff"/></svg>
<span class="t" style='left:788.60px;top:151.00px;font-size:22px;color:#262626;letter-spacing:0.500px;'>JokeFinder</span>
<svg style="left:913.6px;top:150.6px;" width="9" height="21" viewBox="0 0 9 21"><path d="M2.2 2 L6.6 10.4 L2.2 18.8" fill="none" stroke="#787878" stroke-width="2.5" stroke-linecap="round" stroke-linejoin="round"/></svg>
<svg style="left:939.9px;top:150.2px" width="24.9" height="19.6"><path d="M0 2.65 Q0 0 2.75 0 L8.16 0 Q9.87 0 10.99 0.99 L12.02 1.90 Q12.71 2.48 13.91 2.48 L21.98 2.48 Q24.9 2.48 24.9 5.29 L24.9 16.62 Q24.9 19.6 21.81 19.6 L3.09 19.6 Q0 19.6 0 16.62 Z" fill="#8d9297"/><rect x="0" y="6.04" width="24.9" height="1.65" fill="#fff"/></svg>
<span class="t" style='left:976.90px;top:151.00px;font-size:22px;color:#262626;letter-spacing:0.475px;'>Views</span>
<svg style="left:1047.5px;top:150.6px;" width="9" height="21" viewBox="0 0 9 21"><path d="M2.2 2 L6.6 10.4 L2.2 18.8" fill="none" stroke="#787878" stroke-width="2.5" stroke-linecap="round" stroke-linejoin="round"/></svg>
<svg style="left:1074.2px;top:150px" width="24.1" height="21.3"><path transform="scale(1.3302,1.3138) translate(-2.411,-3.409)" d="M13.543 3.41c4.114 2.47 6.545 7.162 5.549 11.131-.024.093-.05.181-.076.272l.002.001c2.062 2.538 1.5 5.258 1.236 4.745-1.072-2.086-3.066-1.568-4.088-1.043a6.803 6.803 0 0 1-.281.158l-.02.012-.002.002c-2.115 1.123-4.957 1.205-7.812-.022a12.568 12.568 0 0 1-5.64-4.838c.649.48 1.35.902 2.097 1.252 3.019 1.414 6.051 1.311 8.197-.002C9.651 12.73 7.101 9.67 5.146 7.191a10.628 10.628 0 0 1-1.005-1.384c2.34 2.142 6.038 4.83 7.365 5.576C8.69 8.408 6.208 4.743 6.324 4.86c4.436 4.47 8.528 6.996 8.528 6.996.154.085.27.154.36.213.085-.215.16-.437.224-.668.708-2.588-.09-5.548-1.893-7.992z" fill="#ef7b4b"/></svg>
<span class="t" style='left:1110.30px;top:151.00px;font-size:22px;color:#262626;letter-spacing:0.506px;'>FavouriteJokesView</span>
<svg style="left:1327.8px;top:150.6px;" width="9" height="21" viewBox="0 0 9 21"><path d="M2.2 2 L6.6 10.4 L2.2 18.8" fill="none" stroke="#787878" stroke-width="2.5" stroke-linecap="round" stroke-linejoin="round"/></svg>
<div style="left:1350.2px;top:144.2px;width:31.4px;height:31.4px;background:#bb58d4;border-radius:6.5px;"></div>
<span class="t b" style='left:1358.20px;top:148.60px;font-size:24px;color:#fff;font-weight:700;'>S</span>
<span class="t" style='left:1390.10px;top:151.00px;font-size:22px;color:#262626;letter-spacing:0.494px;'>FavouriteJokesView</span>
<div style="left:546px;top:552px;width:1731px;height:40px;background:#ecf3fe;"></div>
<div style="left:644px;top:194px;width:14px;height:236px;background:rgba(0,0,0,.09);border-radius:7px;"></div>
<div style="left:644px;top:554px;width:14px;height:396px;background:rgba(0,0,0,.09);border-radius:7px;"></div>
<div style="left:644px;top:594px;width:14px;height:316px;background:rgba(0,0,0,.095);border-radius:7px;box-shadow:0 0 0 1px rgba(255,255,255,.45);"></div>
<div style="left:644px;top:634px;width:14px;height:236px;background:rgba(0,0,0,.095);border-radius:7px;box-shadow:0 0 0 1px rgba(255,255,255,.45);"></div>
<div style="left:644px;top:674px;width:14px;height:116px;background:rgba(0,0,0,.09);border-radius:7px;box-shadow:0 0 0 1px rgba(255,255,255,.45);"></div>
<div style="left:644px;top:994px;width:14px;height:116px;background:rgba(0,0,0,.09);border-radius:7px;"></div>
<span class="ln" style="top:193.3px">1</span>
<div class="cl" style="top:194.2px"><span style="color:#697782">//</span></div>
<span class="ln" style="top:233.3px">2</span>
<div class="cl" style="top:234.2px"><span style="color:#697782">//  FavouriteJokesView.swift</span></div>
<span class="ln" style="top:273.3px">3</span>
<div class="cl" style="top:274.2px"><span style="color:#697782">//  JokeFinder</span></div>
<span class="ln" style="top:313.3px">4</span>
<div class="cl" style="top:314.2px"><span style="color:#697782">//</span></div>
<span class="ln" style="top:353.3px">5</span>
<div class="cl" style="top:354.2px"><span style="color:#697782">//  Created by Russell Gordon on 2025-03-05.</span></div>
<span class="ln" style="top:393.3px">6</span>
<div class="cl" style="top:394.2px"><span style="color:#697782">//</span></div>
<span class="ln" style="top:433.3px">7</span>
<span class="ln" style="top:473.3px">8</span>
<div class="cl" style="top:474.2px"><span class="k" style="color:#a03f9d">import</span><span style="color:#262626"> SwiftUI</span></div>
<span class="ln" style="top:513.3px">9</span>
<span class="ln cur" style="top:553.3px">10</span>
<div class="cl" style="top:554.2px"><span class="k" style="color:#a03f9d">struct</span> <span style="color:#2a5f87">FavouriteJokesView</span><span style="color:#262626">: </span><span style="color:#3d1ea6">View</span><span style="color:#262626"> {</span></div>
<span class="ln" style="top:593.3px">11</span>
<div class="cl" style="top:594.2px">    <span class="k" style="color:#a03f9d">var</span> <span style="color:#2f74a8">body</span><span style="color:#262626">: </span><span class="k" style="color:#a03f9d">some</span> <span style="color:#3d1ea6">View</span><span style="color:#262626"> {</span></div>
<span class="ln" style="top:633.3px">12</span>
<div class="cl" style="top:634.2px">        <span style="color:#3d1ea6">NavigationStack</span><span style="color:#262626"> {</span></div>
<span class="ln" style="top:673.3px">13</span>
<div class="cl" style="top:674.2px">            <span style="color:#3d1ea6">VStack</span><span style="color:#262626"> {</span></div>
<span class="ln" style="top:713.3px">14</span>
<div class="cl" style="top:714.2px">                <span style="color:#3d1ea6">Text</span><span style="color:#262626">(</span><span style="color:#c5392b">&quot;This will show saved jokes.&quot;</span><span style="color:#262626">)</span></div>
<span class="ln" style="top:753.3px">15</span>
<div class="cl" style="top:754.2px"><span style="color:#262626">            }</span></div>
<span class="ln" style="top:793.3px">16</span>
<div class="cl" style="top:794.2px"><span style="color:#262626">            .</span><span style="color:#784cb0">navigationTitle</span><span style="color:#262626">(</span><span style="color:#c5392b">&quot;Favourites&quot;</span><span style="color:#262626">)</span></div>
<span class="ln" style="top:833.3px">17</span>
<div class="cl" style="top:834.2px"><span style="color:#262626">        }</span></div>
<span class="ln" style="top:873.3px">18</span>
<div class="cl" style="top:874.2px"><span style="color:#262626">    }</span></div>
<span class="ln" style="top:913.3px">19</span>
<div class="cl" style="top:914.2px"><span style="color:#262626">}</span></div>
<span class="ln" style="top:953.3px">20</span>
<span class="ln" style="top:993.3px">21</span>
<div class="cl" style="top:994.2px"><span style="color:#784cb0">#Preview</span><span style="color:#262626"> {</span></div>
<span class="ln" style="top:1033.3px">22</span>
<div class="cl" style="top:1034.2px">    <span style="color:#2d4f54">FavouriteJokesView</span><span style="color:#262626">()</span></div>
<span class="ln" style="top:1073.3px">23</span>
<div class="cl" style="top:1074.2px"><span style="color:#262626">}</span></div>
<span class="ln" style="top:1113.3px">24</span>
<div style="left:2276px;top:190px;width:2px;height:1643px;background:#eeeeee;"></div>
<div style="left:2278px;top:190px;width:26px;height:1643px;background:#fafafa;"></div>
<div style="left:2304px;top:190px;width:2px;height:1643px;background:#eeeeee;"></div>
<div style="left:2306px;top:190px;width:2px;height:1643px;background:#e8e8e8;"></div>
<div style="left:2284px;top:196px;width:16px;height:1513.5px;background:#7f7f7f;border-radius:8px;box-shadow:0 0 0 1px rgba(255,255,255,.7);"></div>
<div style="left:2308px;top:190px;width:716px;height:1643px;background:#f2f2f2;"></div>
<div style="left:546px;top:1832px;width:2478px;height:2px;background:#e3e3e3;"></div>
<div style="left:546px;top:1834px;width:2478px;height:54px;background:#fff;"></div>
<svg style="left:568px;top:1851px;" width="31" height="20" viewBox="0 0 31 20"><path d="M4.2 1.2 L21.4 1.2 Q23.4 1.2 24.6 2.8 L29 8.6 Q29.8 9.8 29 11 L24.6 16.8 Q23.4 18.6 21.4 18.6 L4.2 18.6 Q1.2 18.6 1.2 15.6 L1.2 4.2 Q1.2 1.2 4.2 1.2 Z" fill="#3478f6"/></svg>
<span class="t" style='left:2774.00px;top:1850.50px;font-size:22px;color:#7f7f7f;letter-spacing:0.747px;-webkit-text-stroke:0.75px;'>Line: 10  Col: 1</span>
<div style="left:2954px;top:1850px;width:2px;height:23px;background:#e0e0e0;"></div>
<svg style="left:2972px;top:1847.2px;" width="28" height="27" viewBox="0 0 28 27"><rect x="2.1" y="2.1" width="23.6" height="22.6" rx="4.6" fill="none" stroke="#7a7a7a" stroke-width="2.1"/><rect x="5.4" y="16.4" width="17" height="5.4" rx="1.4" fill="#7a7a7a"/></svg>
<div style="left:2331.8px;top:213.8px;width:63.4px;height:52px;background:#fff;border-radius:14px;box-shadow:0 0 0 1px rgba(0,0,0,.035),0 1px 5px rgba(0,0,0,.16);"></div>
<svg style="left:2350px;top:224px;" width="28" height="33" viewBox="0 0 28 33"><path d="M6 2.3 H20.2 Q21.9 2.3 20.6 3.5 L16.9 6.5 L17.3 12.7 Q22.3 14.8 22.8 19 Q22.8 20 21.8 20 H4.4 Q3.4 20 3.4 19 Q3.9 14.8 8.9 12.7 L9.3 6.5 L5.6 3.5 Q4.3 2.3 6 2.3 Z" fill="none" stroke="#444" stroke-width="2.2" stroke-linejoin="round"/><path d="M9 13.2 Q13.1 11.6 17.2 13.2" fill="none" stroke="#444" stroke-width="2"/><path d="M13 20.4 V29.6" stroke="#444" stroke-width="2.3" stroke-linecap="round"/></svg>
<div style="left:2415px;top:213.8px;width:275px;height:52px;background:#cfdefc;border-radius:14px;box-shadow:0 0 0 1px rgba(0,0,0,.035),0 1px 5px rgba(0,0,0,.16);"></div>
<svg style="left:2431px;top:225px;" width="26" height="28" viewBox="0 0 26 28"><rect x="2.8" y="9.6" width="19.8" height="15.2" rx="3.4" fill="none" stroke="#3478f6" stroke-width="2.3"/><path d="M4.6 5.8 H21 M6.6 2.9 H19" stroke="#3478f6" stroke-width="1.9" stroke-linecap="round"/></svg>
<span class="t" style='left:2466.40px;top:230.00px;font-size:22px;color:#2f6fe6;letter-spacing:0.512px;'>FavouriteJokesView</span>
<div style="left:2352.4px;top:594.5px;width:8px;height:46px;background:#2b2b2b;border-radius:2px;"></div>
<div style="left:2352.4px;top:681.5px;width:8px;height:87.5px;background:#2b2b2b;border-radius:2px;"></div>
<div style="left:2352.4px;top:793.6px;width:8px;height:87.7px;background:#2b2b2b;border-radius:2px;"></div>
<div style="left:2970.6px;top:739.6px;width:8px;height:139.3px;background:#2b2b2b;border-radius:2px;"></div>
<svg style="left:2340px;top:360px;filter:drop-shadow(0 0 1px rgba(0,0,0,.45));" width="650" height="1300" viewBox="0 0 650 1300"><path d="M19.0 146.0 C19.0 52.7 62.5 9.2 155.8 9.2 L495.2 9.2 C588.5 9.2 632.0 52.7 632.0 146.0 L632.0 1154.0 C632.0 1247.3 588.5 1290.8 495.2 1290.8 L155.8 1290.8 C62.5 1290.8 19.0 1247.3 19.0 1154.0 Z" fill="#2d2d2d"/><path d="M26.0 144.6 C26.0 57.0 66.8 16.2 154.4 16.2 L496.6 16.2 C584.2 16.2 625.0 57.0 625.0 144.6 L625.0 1155.4 C625.0 1243.0 584.2 1283.8 496.6 1283.8 L154.4 1283.8 C66.8 1283.8 26.0 1243.0 26.0 1155.4 Z" fill="#000"/><path d="M41.0 136.5 C41.0 64.2 74.7 30.5 147.0 30.5 L505.0 30.5 C577.3 30.5 611.0 64.2 611.0 136.5 L611.0 1164.0 C611.0 1236.3 577.3 1270.0 505.0 1270.0 L147.0 1270.0 C74.7 1270.0 41.0 1236.3 41.0 1164.0 Z" fill="#fff"/></svg>
<div style="left:2577.2px;top:411.2px;width:177.5px;height:51.6px;background:#000;border-radius:26px;"></div>
<span class="t b" style='left:2401.50px;top:545.20px;font-size:46.5px;color:#000;letter-spacing:0.133px;font-weight:700;'>Favourites</span>
<span class="t" style='left:2523.20px;top:1083.20px;font-size:24px;color:#000;letter-spacing:-0.031px;'>This will show saved jokes.</span>
<div style="left:2331.6px;top:1756px;width:163.4px;height:52.4px;background:#fff;border-radius:13px;box-shadow:0 0 0 1px rgba(0,0,0,.035),0 1px 5px rgba(0,0,0,.16);"></div>
<div style="left:2514.6px;top:1756px;width:63.6px;height:52.4px;background:#fff;border-radius:13px;box-shadow:0 0 0 1px rgba(0,0,0,.035),0 1px 5px rgba(0,0,0,.16);"></div>
<div style="left:2597.8px;top:1756px;width:54.4px;height:52.4px;background:#fff;border-radius:13px;box-shadow:0 0 0 1px rgba(0,0,0,.035),0 1px 5px rgba(0,0,0,.16);"></div>
<div style="left:2791.5px;top:1756px;width:208.8px;height:52.4px;background:#fff;border-radius:13px;box-shadow:0 0 0 1px rgba(0,0,0,.035),0 1px 5px rgba(0,0,0,.16);"></div>
<svg style="left:2349.6px;top:1768.5px;" width="27" height="27" viewBox="0 0 27 27"><circle cx="13.3" cy="13.3" r="13.3" fill="#3478f6"/><path d="M9.8 7.8 L18.4 13.3 L9.8 18.8 Z" fill="#fff" stroke="#fff" stroke-width="1" stroke-linejoin="round"/></svg>
<svg style="left:2396.5px;top:1768.5px;" width="27" height="27" viewBox="0 0 27 27"><rect x="2.2" y="2.2" width="22" height="22" rx="3.2" fill="none" stroke="#4d4d4d" stroke-width="2.5"/><path d="M9.4 6.6 L9.4 18.4 L12.4 15.6 L14.8 20.6 L16.8 19.6 L14.4 14.8 L18.4 14.6 Z" fill="#4d4d4d"/></svg>
<svg style="left:2451px;top:1772px;" width="26" height="21" viewBox="0 0 26 21"><rect x="1.4" y="1.4" width="5.2" height="7.4" rx="1" fill="none" stroke="#4d4d4d" stroke-width="1.6"/><rect x="10.1" y="1.4" width="5.2" height="7.4" rx="1" fill="none" stroke="#4d4d4d" stroke-width="1.6"/><rect x="18.8" y="1.4" width="5.2" height="7.4" rx="1" fill="none" stroke="#4d4d4d" stroke-width="1.6"/><rect x="1.4" y="12.0" width="5.2" height="7.4" rx="1" fill="none" stroke="#4d4d4d" stroke-width="1.6"/><rect x="10.1" y="12.0" width="5.2" height="7.4" rx="1" fill="none" stroke="#4d4d4d" stroke-width="1.6"/><rect x="18.8" y="12.0" width="5.2" height="7.4" rx="1" fill="none" stroke="#4d4d4d" stroke-width="1.6"/></svg>
<svg style="left:2532.5px;top:1769.5px;" width="28" height="27" viewBox="0 0 28 27"><rect x="1.4" y="1.4" width="23.6" height="10.6" rx="5.3" fill="none" stroke="#4d4d4d" stroke-width="2"/><circle cx="7" cy="6.7" r="2.7" fill="#4d4d4d"/><rect x="0.4" y="14.4" width="25.6" height="11" rx="5.5" fill="#4d4d4d"/><circle cx="19.6" cy="19.9" r="3.1" fill="#fff"/></svg>
<svg style="left:2616.8px;top:1770px;" width="17" height="27" viewBox="0 0 17 27"><rect x="1.8" y="1.5" width="12.6" height="21.4" rx="2.6" fill="#d5d5d5" stroke="#4d4d4d" stroke-width="1.9"/><path d="M6 4.4 h4.2" stroke="#4d4d4d" stroke-width="1.4" stroke-linecap="round"/><path d="M5.6 20.4 h5" stroke="#4d4d4d" stroke-width="1.2"/></svg>
<svg style="left:2810px;top:1768px;" width="28" height="28" viewBox="0 0 28 28"><circle cx="11.3" cy="11.5" r="9.2" fill="none" stroke="#4d4d4d" stroke-width="2.8"/><path d="M18.2 18.4 L24.4 24.6" stroke="#4d4d4d" stroke-width="3.5" stroke-linecap="round"/><path d="M7.2 11.5 H15.4" stroke="#4d4d4d" stroke-width="2.2"/></svg>
<svg style="left:2858.2px;top:1768px;" width="28" height="28" viewBox="0 0 28 28"><circle cx="11.3" cy="11.5" r="9.2" fill="none" stroke="#4d4d4d" stroke-width="2.8"/><path d="M18.2 18.4 L24.4 24.6" stroke="#4d4d4d" stroke-width="3.5" stroke-linecap="round"/><path d="M9.6 8.6 L11.9 7.2 V15.6" fill="none" stroke="#4d4d4d" stroke-width="1.9"/></svg>
<svg style="left:2906.2px;top:1768px;" width="28" height="28" viewBox="0 0 28 28"><circle cx="11.3" cy="11.5" r="9.2" fill="none" stroke="#4d4d4d" stroke-width="2.8"/><path d="M18.2 18.4 L24.4 24.6" stroke="#4d4d4d" stroke-width="3.5" stroke-linecap="round"/><rect x="7.9" y="8.1" width="6.8" height="6.8" rx="1.3" fill="none" stroke="#4d4d4d" stroke-width="2"/></svg>
<svg style="left:2954.2px;top:1768px;" width="28" height="28" viewBox="0 0 28 28"><circle cx="11.3" cy="11.5" r="9.2" fill="none" stroke="#4d4d4d" stroke-width="2.8"/><path d="M18.2 18.4 L24.4 24.6" stroke="#4d4d4d" stroke-width="3.5" stroke-linecap="round"/><path d="M7.2 11.5 H15.4 M11.3 7.4 V15.6" stroke="#4d4d4d" stroke-width="2.2"/></svg>
</div>
</body></html>
